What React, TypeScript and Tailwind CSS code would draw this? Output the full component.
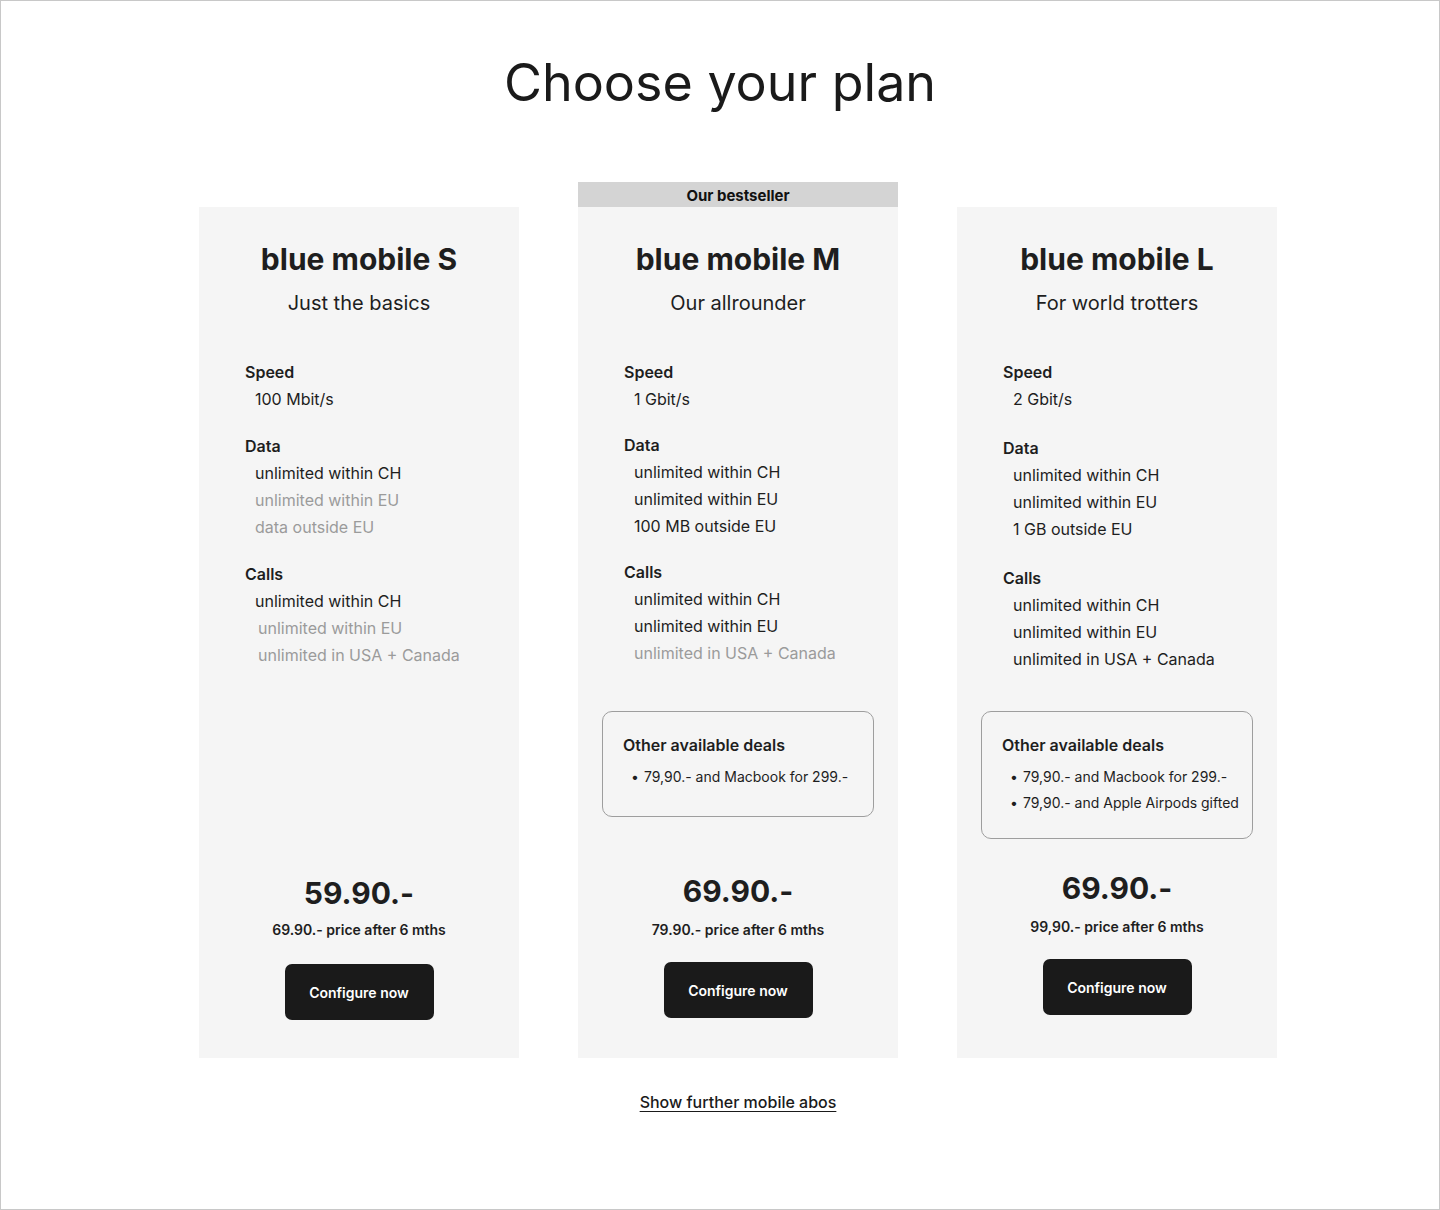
import React from 'react';

interface Line {
  text: string;
  muted?: boolean;
  extraIndent?: boolean;
}

interface Section {
  label: string;
  lines: Line[];
}

interface Plan {
  id: string;
  name: string;
  tagline: string;
  bestseller?: boolean;
  sections: Section[];
  sectionGap: number;
  deals?: string[];
  dealsTop?: number;
  dealsBottom?: number;
  price: string;
  afterPrice: string;
  priceGap: number;
  buttonGap: number;
  bottom: number;
}

const plans: Plan[] = [
  {
    id: 's',
    name: 'blue mobile S',
    tagline: 'Just the basics',
    sections: [
      { label: 'Speed', lines: [{ text: '100 Mbit/s' }] },
      {
        label: 'Data',
        lines: [
          { text: 'unlimited within CH' },
          { text: 'unlimited within EU', muted: true },
          { text: 'data outside EU', muted: true },
        ],
      },
      {
        label: 'Calls',
        lines: [
          { text: 'unlimited within CH' },
          { text: 'unlimited within EU', muted: true, extraIndent: true },
          { text: 'unlimited in USA + Canada', muted: true, extraIndent: true },
        ],
      },
    ],
    sectionGap: 20,
    price: '59.90.-',
    afterPrice: '69.90.- price after 6 mths',
    priceGap: 9,
    buttonGap: 24,
    bottom: 38,
  },
  {
    id: 'm',
    name: 'blue mobile M',
    tagline: 'Our allrounder',
    bestseller: true,
    sections: [
      { label: 'Speed', lines: [{ text: '1 Gbit/s' }] },
      {
        label: 'Data',
        lines: [
          { text: 'unlimited within CH' },
          { text: 'unlimited within EU' },
          { text: '100 MB outside EU' },
        ],
      },
      {
        label: 'Calls',
        lines: [
          { text: 'unlimited within CH' },
          { text: 'unlimited within EU' },
          { text: 'unlimited in USA + Canada', muted: true },
        ],
      },
    ],
    sectionGap: 19,
    deals: ['79,90.- and Macbook for 299.-'],
    dealsTop: 44,
    dealsBottom: 26,
    price: '69.90.-',
    afterPrice: '79.90.- price after 6 mths',
    priceGap: 11,
    buttonGap: 22,
    bottom: 40,
  },
  {
    id: 'l',
    name: 'blue mobile L',
    tagline: 'For world trotters',
    sections: [
      { label: 'Speed', lines: [{ text: '2 Gbit/s' }] },
      {
        label: 'Data',
        lines: [
          { text: 'unlimited within CH' },
          { text: 'unlimited within EU' },
          { text: '1 GB outside EU' },
        ],
      },
      {
        label: 'Calls',
        lines: [
          { text: 'unlimited within CH' },
          { text: 'unlimited within EU' },
          { text: 'unlimited in USA + Canada' },
        ],
      },
    ],
    sectionGap: 22,
    deals: ['79,90.- and Macbook for 299.-', '79,90.- and Apple Airpods gifted'],
    dealsTop: 38,
    dealsBottom: 22,
    price: '69.90.-',
    afterPrice: '99,90.- price after 6 mths',
    priceGap: 11,
    buttonGap: 22,
    bottom: 43,
  },
];

function PlanCard({ plan }: { plan: Plan }) {
  return (
    <div className="flex w-[320px] flex-col">
      {/* slot above the card, only used by the bestseller */}
      <div className="flex h-[25px] items-center justify-center">
        {plan.bestseller && (
          <div className="flex h-full w-full items-center justify-center bg-[#d4d4d4] pt-[3px] text-[15px] font-bold text-[#111]">
            Our bestseller
          </div>
        )}
      </div>

      <div className="flex h-[851px] flex-col bg-[#f5f5f5]">
        <div className="pt-[34px] text-center">
          <h2 className="text-[30px] font-bold leading-[36px] text-[#1e1e1e]">{plan.name}</h2>
          <p className="mt-[12px] text-[20px] leading-[28px] text-[#1e1e1e]">{plan.tagline}</p>
        </div>

        <div className="mt-[42px] pl-[46px]">
          {plan.sections.map((section, i) => (
            <div key={section.label} style={{ marginTop: i === 0 ? 0 : plan.sectionGap }}>
              <p className="text-[16px] font-semibold leading-[27px] text-[#1e1e1e]">{section.label}</p>
              {section.lines.map((line) => (
                <p
                  key={line.text}
                  className={`text-[16px] leading-[27px] ${line.extraIndent ? 'pl-[13px]' : 'pl-[10px]'} ${
                    line.muted ? 'text-[#9b9b9b]' : 'text-[#1e1e1e]'
                  }`}
                >
                  {line.text}
                </p>
              ))}
            </div>
          ))}
        </div>

        {plan.deals && (
          <div
            className="ml-6 mr-[24px] rounded-[10px] border border-[#9e9e9e] pl-[20px] pt-[21px]"
            style={{ marginTop: plan.dealsTop, paddingBottom: plan.dealsBottom }}
          >
            <p className="text-[16px] font-semibold leading-[24px] text-[#1e1e1e]">Other available deals</p>
            <ul className="mt-[7px]">
              {plan.deals.map((deal) => (
                <li key={deal} className="flex text-[14px] leading-[26px] text-[#1e1e1e]">
                  <span className="ml-[8px] w-[13px]">•</span>
                  {deal}
                </li>
              ))}
            </ul>
          </div>
        )}

        <div className="mt-auto flex flex-col items-center" style={{ paddingBottom: plan.bottom }}>
          <p className="text-[30px] font-bold leading-[36px] text-[#1e1e1e]">{plan.price}</p>
          <p
            className="text-[14px] font-semibold leading-[20px] text-[#1e1e1e]"
            style={{ marginTop: plan.priceGap }}
          >
            {plan.afterPrice}
          </p>
          <button
            className="h-[56px] w-[149px] rounded-[7px] bg-[#1a1a1a] text-[14px] font-semibold text-white"
            style={{ marginTop: plan.buttonGap }}
          >
            Configure now
          </button>
        </div>
      </div>
    </div>
  );
}

export default function App() {
  return (
    <div
      className="h-[1210px] w-[1440px] border border-[#c8c8c8] bg-white"
      style={{ fontFamily: 'Inter, "Noto Sans", sans-serif' }}
    >
      <h1 className="pt-[56px] text-center text-[52px] leading-none text-[#1a1a1a]">Choose your plan</h1>

      <div className="mt-[73px] flex flex-col items-center pl-[36px]">
        <div className="flex gap-[59px]">
          {plans.map((plan) => (
            <PlanCard key={plan.id} plan={plan} />
          ))}
        </div>
        <a href="#" className="mt-[32px] text-[16px] font-medium leading-[24px] text-[#1a1a1a] underline underline-offset-[3px]">
          Show further mobile abos
        </a>
      </div>
    </div>
  );
}
